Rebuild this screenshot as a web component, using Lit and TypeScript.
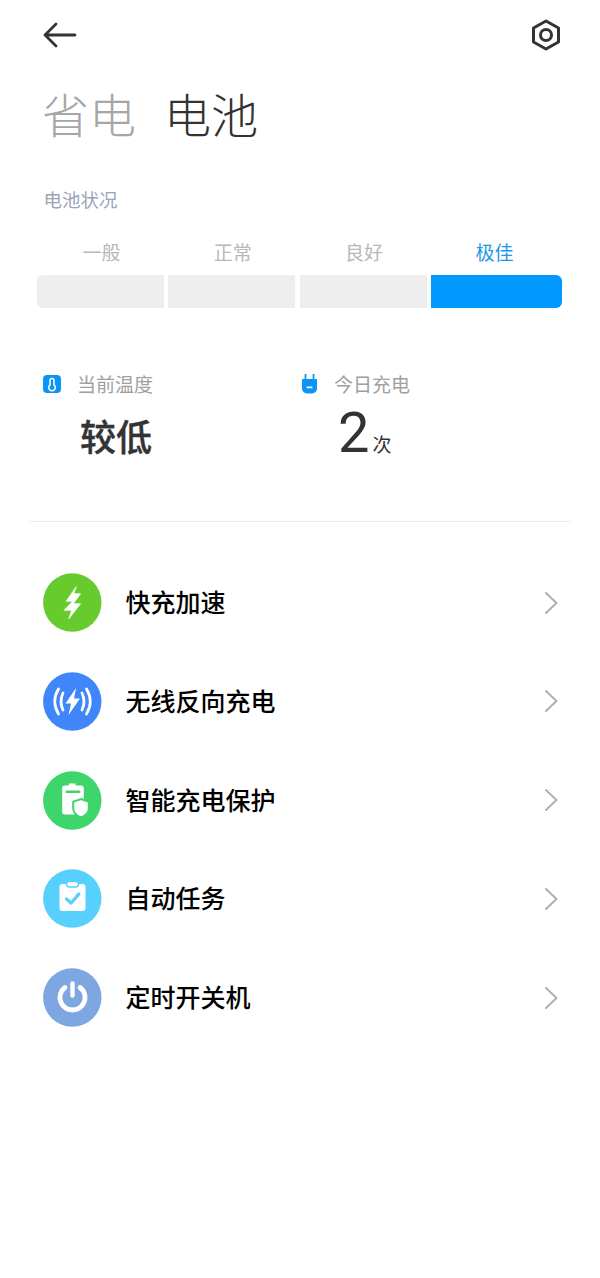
import { LitElement, html, css, svg } from 'lit';
import { customElement } from 'lit/decorators.js';

const levels = [
  { text: '一般' },
  { text: '正常' },
  { text: '良好' },
  { text: '极佳', active: true },
];

const rows = [
  {
    text: '快充加速',
    color: '#67cb2e',
    icon: svg`<path d="M33.2 13.8 23.2 28.2h6.6l-8.6 9h7.6l-3 8.6 11.7-15h-7.3l7.3-10h-6.7z" fill="#fff" stroke="#fff" stroke-width=".8" stroke-linejoin="round"/>`,
  },
  {
    text: '无线反向充电',
    color: '#3f86fb',
    icon: svg`<path d="M33 16 22.5 31.5H28L25.5 43 37 26.5h-6z" fill="#fff"/>
      <g fill="none" stroke="#fff" stroke-width="2.800" stroke-linecap="round">
        <path d="M20 21q-4 8.500 0 17M15.500 17q-7.500 12.500 0 25"/>
        <path d="M39 21q4 8.500 0 17M43.500 17q7.500 12.500 0 25"/>
      </g>`,
  },
  {
    text: '智能充电保护',
    color: '#3ed56b',
    icon: svg`<path d="M25.800 12.500h6.700v2H38a2.800 2.800 0 0 1 2.800 2.800v23.400a2.800 2.800 0 0 1-2.800 2.800H22a2.800 2.800 0 0 1-2.800-2.800V17.300a2.800 2.800 0 0 1 2.800-2.800h3.800z" fill="#fff"/>
      <rect x="22.500" y="19.500" width="15" height="2.600" rx="1.300" fill="#3ed56b"/>
      <path d="M38 28l7.800 2.800v6.700c0 4-3.200 7-7.800 9-4.600-2-7.800-5-7.800-9v-6.700z" fill="#fff" stroke="#3ed56b" stroke-width="2"/>`,
  },
  {
    text: '自动任务',
    color: '#57d0fe',
    icon: svg`<rect x="16.500" y="15" width="26" height="27" rx="3" fill="#fff"/>
      <rect x="23.500" y="12.500" width="12" height="5.500" rx="2.700" fill="#fff" stroke="#57d0fe" stroke-width="1.500"/>
      <path d="M23.500 30l4.700 4 7.600-9" fill="none" stroke="#57d0fe" stroke-width="3.400" stroke-linecap="round" stroke-linejoin="round"/>`,
  },
  {
    text: '定时开关机',
    color: '#7ea6e0',
    icon: svg`<g fill="none" stroke="#fff" stroke-linecap="round">
        <path d="M22 19.500a12.500 12.500 0 1 0 15 0" stroke-width="4.800"/>
        <path d="M29.500 15.500v12" stroke-width="4.400"/>
      </g>`,
  },
];

@customElement('app-root')
export class AppRoot extends LitElement {
  static styles = css`
    :host {
      display: block;
      background: #fff;
      font-family: 'Noto Sans CJK SC', 'Noto Sans', sans-serif;
      min-height: 1278px;
    }

    .header {
      display: flex;
      justify-content: space-between;
      align-items: center;
      height: 70px;
      padding: 0 39px 0 43px;
    }

    .title {
      display: flex;
      gap: 28px;
      padding-left: 42px;
      margin-top: 11px;
      font-size: 47px;
      line-height: 64px;
      font-weight: 300;
      color: #333;
    }

    .title .muted {
      color: #a6a6a6;
    }

    .section {
      padding-left: 43.500px;
      margin-top: 40px;
      font-size: 18.500px;
      line-height: 28px;
      color: #9ba3b8;
    }

    .levels {
      display: grid;
      grid-template-columns: 127px 127px 127px 131px;
      column-gap: 4.300px;
      padding-left: 37px;
      margin-top: 25px;
    }

    .level-label {
      padding-left: 2px;
      text-align: center;
      font-size: 19px;
      line-height: 28px;
      color: #b8b8b8;
      margin-bottom: 9px;
    }

    .level.active .level-label {
      color: #1c98e8;
      padding-left: 0;
      padding-right: 4px;
    }

    .bar {
      height: 33px;
      background: #eee;
    }

    .level:first-child .bar {
      border-radius: 6px 0 0 6px;
    }

    .level.active .bar {
      background: #009aff;
      border-radius: 0 6px 6px 0;
    }

    .stats {
      display: grid;
      grid-template-columns: 258px 1fr;
      padding-left: 43px;
      margin-top: 62px;
    }

    .stat-head {
      display: flex;
      align-items: center;
      gap: 16px;
      font-size: 19px;
      line-height: 28px;
      color: #a0a0a0;
    }

    .stat-head svg {
      display: block;
    }

    .stat-value {
      display: flex;
      align-items: baseline;
      height: 56px;
      margin-top: 8px;
      color: #333;
    }

    .stat-value.text {
      padding-left: 37px;
      padding-top: 2px;
      height: 54px;
      font-size: 36px;
      line-height: 54px;
      font-weight: 500;
      -webkit-text-stroke: 0.4px #333;
    }

    .stat-value.count {
      padding-left: 37px;
      font-size: 56px;
      line-height: 54px;
      gap: 3px;
      font-family: 'Roboto', sans-serif;
      font-weight: 400;
    }

    .stat-value .unit {
      font-family: 'Noto Sans CJK SC', sans-serif;
      font-size: 19px;
      line-height: 1;
    }

    .divider {
      height: 1px;
      background: #ececec;
      margin: 59px 29px 0 30px;
    }

    .list {
      margin-top: 51px;
    }

    .row {
      display: flex;
      align-items: center;
      height: 59px;
      padding: 0 42px 0 42.500px;
      margin-bottom: 39.750px;
    }

    .circle {
      display: block;
      flex: none;
    }

    .row-text {
      flex: 1;
      margin-left: 24px;
      padding-bottom: 3px;
      font-size: 25px;
      font-weight: 500;
      color: #000;
    }
  `;

  render() {
    return html`
      <div class="header">
        <svg width="34" height="26" viewBox="0 0 34 26" fill="none" stroke="#333" stroke-width="2.800" stroke-linecap="round" stroke-linejoin="round">
          <path d="M2 13h30M13 2 2 13l11 11"/>
        </svg>
        <svg width="30" height="32" viewBox="0 0 30 32" fill="none" stroke="#333" stroke-width="3" stroke-linejoin="round">
          <path d="M15 2l12.500 7v14L15 30 2.500 23V9z"/>
          <circle cx="15" cy="16" r="5.500"/>
        </svg>
      </div>

      <div class="title"><span class="muted">省电</span><span>电池</span></div>

      <div class="section">电池状况</div>

      <div class="levels">
        ${levels.map((l) => html`
          <div class="level ${l.active ? 'active' : ''}">
            <div class="level-label">${l.text}</div>
            <div class="bar"></div>
          </div>
        `)}
      </div>

      <div class="stats">
        <div>
          <div class="stat-head">
            <svg width="18" height="18" viewBox="0 0 18 18">
              <rect width="18" height="18" rx="4" fill="#0a96f5"/>
              <path d="M9 3.500a2 2 0 0 1 2 2v4.300a3.300 3.300 0 1 1-4 0V5.500a2 2 0 0 1 2-2z" fill="none" stroke="#fff" stroke-width="1.500"/>
            </svg>
            当前温度
          </div>
          <div class="stat-value text">较低</div>
        </div>
        <div>
          <div class="stat-head">
            <svg width="17" height="20" viewBox="-.5 0 17 20">
              <path d="M4 0.500v5M12 0.500v5" stroke="#0a96f5" stroke-width="1.800" stroke-linecap="round"/>
              <path d="M0.500 5h15v9.500a5 5 0 0 1-5 5h-5a5 5 0 0 1-5-5z" fill="#0a96f5"/>
              <rect x="5" y="12.500" width="6" height="1.800" rx=".9" fill="#fff"/>
            </svg>
            今日充电
          </div>
          <div class="stat-value count">2<span class="unit">次</span></div>
        </div>
      </div>

      <div class="divider"></div>

      <div class="list">
        ${rows.map((r) => html`
          <div class="row">
            <svg class="circle" width="59" height="59" viewBox="0 0 59 59">
              <circle cx="29.300" cy="29.500" r="29.200" fill="${r.color}"/>
              ${r.icon}
            </svg>
            <span class="row-text">${r.text}</span>
            <svg width="14" height="24" viewBox="0 0 14 24" fill="none" stroke="#b0b0b0" stroke-width="2" stroke-linecap="round" stroke-linejoin="round">
              <path d="M2 2l10.500 10L2 22"/>
            </svg>
          </div>
        `)}
      </div>
    `;
  }
}
